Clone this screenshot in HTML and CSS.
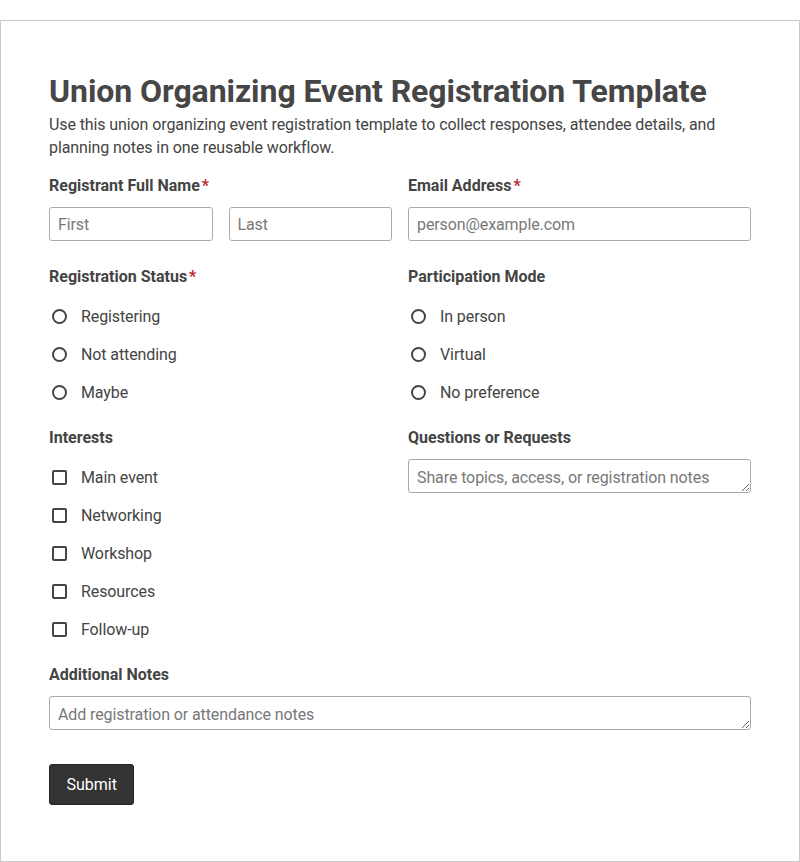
FILE: index.html
```html
<!DOCTYPE html>
<html lang="en">
<head>
<meta charset="utf-8">
<title>Union Organizing Event Registration Template</title>
<link rel="stylesheet" href="styles.css">
</head>
<body>
<form class="card">
  <h1 class="title">Union Organizing Event Registration Template</h1>
  <p class="desc">Use this union organizing event registration template to collect responses, attendee details, and planning notes in one reusable workflow.</p>
  <div class="grid">
    <div class="field field-input">
      <label class="label">Registrant Full Name<span class="req">*</span></label>
      <div class="name-row">
        <input class="input" type="text" placeholder="First">
        <input class="input" type="text" placeholder="Last">
      </div>
    </div>
    <div class="field field-input">
      <label class="label">Email Address<span class="req">*</span></label>
      <input class="input" type="email" placeholder="person@example.com">
    </div>
    <div class="field">
      <div class="label">Registration Status<span class="req">*</span></div>
      <div class="options">
        <label class="option"><input class="radio" type="radio" name="status"><span>Registering</span></label>
        <label class="option"><input class="radio" type="radio" name="status"><span>Not attending</span></label>
        <label class="option"><input class="radio" type="radio" name="status"><span>Maybe</span></label>
      </div>
    </div>
    <div class="field">
      <div class="label">Participation Mode</div>
      <div class="options">
        <label class="option"><input class="radio" type="radio" name="mode"><span>In person</span></label>
        <label class="option"><input class="radio" type="radio" name="mode"><span>Virtual</span></label>
        <label class="option"><input class="radio" type="radio" name="mode"><span>No preference</span></label>
      </div>
    </div>
    <div class="field">
      <div class="label">Interests</div>
      <div class="options">
        <label class="option"><input class="check" type="checkbox"><span>Main event</span></label>
        <label class="option"><input class="check" type="checkbox"><span>Networking</span></label>
        <label class="option"><input class="check" type="checkbox"><span>Workshop</span></label>
        <label class="option"><input class="check" type="checkbox"><span>Resources</span></label>
        <label class="option"><input class="check" type="checkbox"><span>Follow-up</span></label>
      </div>
    </div>
    <div class="field field-input">
      <label class="label">Questions or Requests</label>
      <textarea class="input textarea" rows="1" placeholder="Share topics, access, or registration notes"></textarea>
    </div>
    <div class="field field-input field-wide">
      <label class="label">Additional Notes</label>
      <textarea class="input textarea" rows="1" placeholder="Add registration or attendance notes"></textarea>
    </div>
  </div>
  <div class="actions">
    <button class="submit" type="submit">Submit</button>
  </div>
</form>
</body>
</html>
```

FILE: styles.css
```css
* { box-sizing: border-box; }

html, body {
  margin: 0;
  padding: 0;
  background: #ffffff;
}

body {
  padding-top: 20px;
  font-family: Roboto, "Liberation Sans", Arial, sans-serif;
  color: #444444;
  font-size: 16px;
}

.card {
  width: 800px;
  border: 1px solid #c8c8c8;
  padding: 51px 48px 56px 48px;
  background: #ffffff;
}

.title {
  margin: 0;
  font-size: 32px;
  line-height: 38px;
  font-weight: 700;
  letter-spacing: -0.07px;
  color: #464646;
}

.desc {
  margin: 3px 0 0 0;
  font-size: 16px;
  line-height: 23px;
  letter-spacing: -0.1px;
  color: #444444;
}

.grid {
  margin-top: 18px;
  display: grid;
  grid-template-columns: 1fr 1fr;
  column-gap: 16px;
  row-gap: 17px;
}

.field {
  display: flex;
  flex-direction: column;
  min-width: 0;
}

.field-input {
  padding-bottom: 10px;
}

.field-wide {
  grid-column: 1 / span 2;
}

.label {
  display: block;
  font-weight: 700;
  font-size: 16px;
  line-height: 17px;
  margin-bottom: 13px;
  color: #444444;
}

.req {
  color: #c0262d;
  margin-left: 2px;
}

.name-row {
  display: flex;
  gap: 16px;
}

.name-row .input {
  flex: 1 1 0;
  min-width: 0;
}

.input {
  display: block;
  width: 100%;
  height: 34px;
  margin: 0;
  padding: 0 8px;
  border: 1px solid #a9a9a9;
  border-radius: 3px;
  font-family: Roboto, "Liberation Sans", Arial, sans-serif;
  font-size: 16px;
  letter-spacing: -0.1px;
  color: #444444;
  background: #ffffff;
}

.input::placeholder {
  color: #787878;
}

.textarea {
  padding: 8px 8px 4px 8px;
  line-height: 20px;
  resize: vertical;
}

.options {
  display: flex;
  flex-direction: column;
}

.option {
  display: flex;
  align-items: center;
  height: 38px;
  padding-bottom: 2px;
  gap: 14px;
  font-size: 16px;
  line-height: 23px;
  letter-spacing: -0.1px;
  color: #444444;
}

.radio,
.check {
  appearance: none;
  -webkit-appearance: none;
  flex: none;
  width: 15px;
  height: 15px;
  margin: 0 0 0 3px;
  border: 2px solid #454545;
  background: #ffffff;
}

.radio {
  border-radius: 50%;
}

.check {
  border-radius: 2px;
}

.actions {
  margin-top: 24px;
}

.submit {
  display: block;
  margin: 0;
  padding: 10px 16.5px;
  height: 41px;
  border: 1px solid #222222;
  border-radius: 3px;
  background: #333333;
  color: #ffffff;
  font-family: Roboto, "Liberation Sans", Arial, sans-serif;
  font-size: 16px;
  line-height: 18px;
}
```
